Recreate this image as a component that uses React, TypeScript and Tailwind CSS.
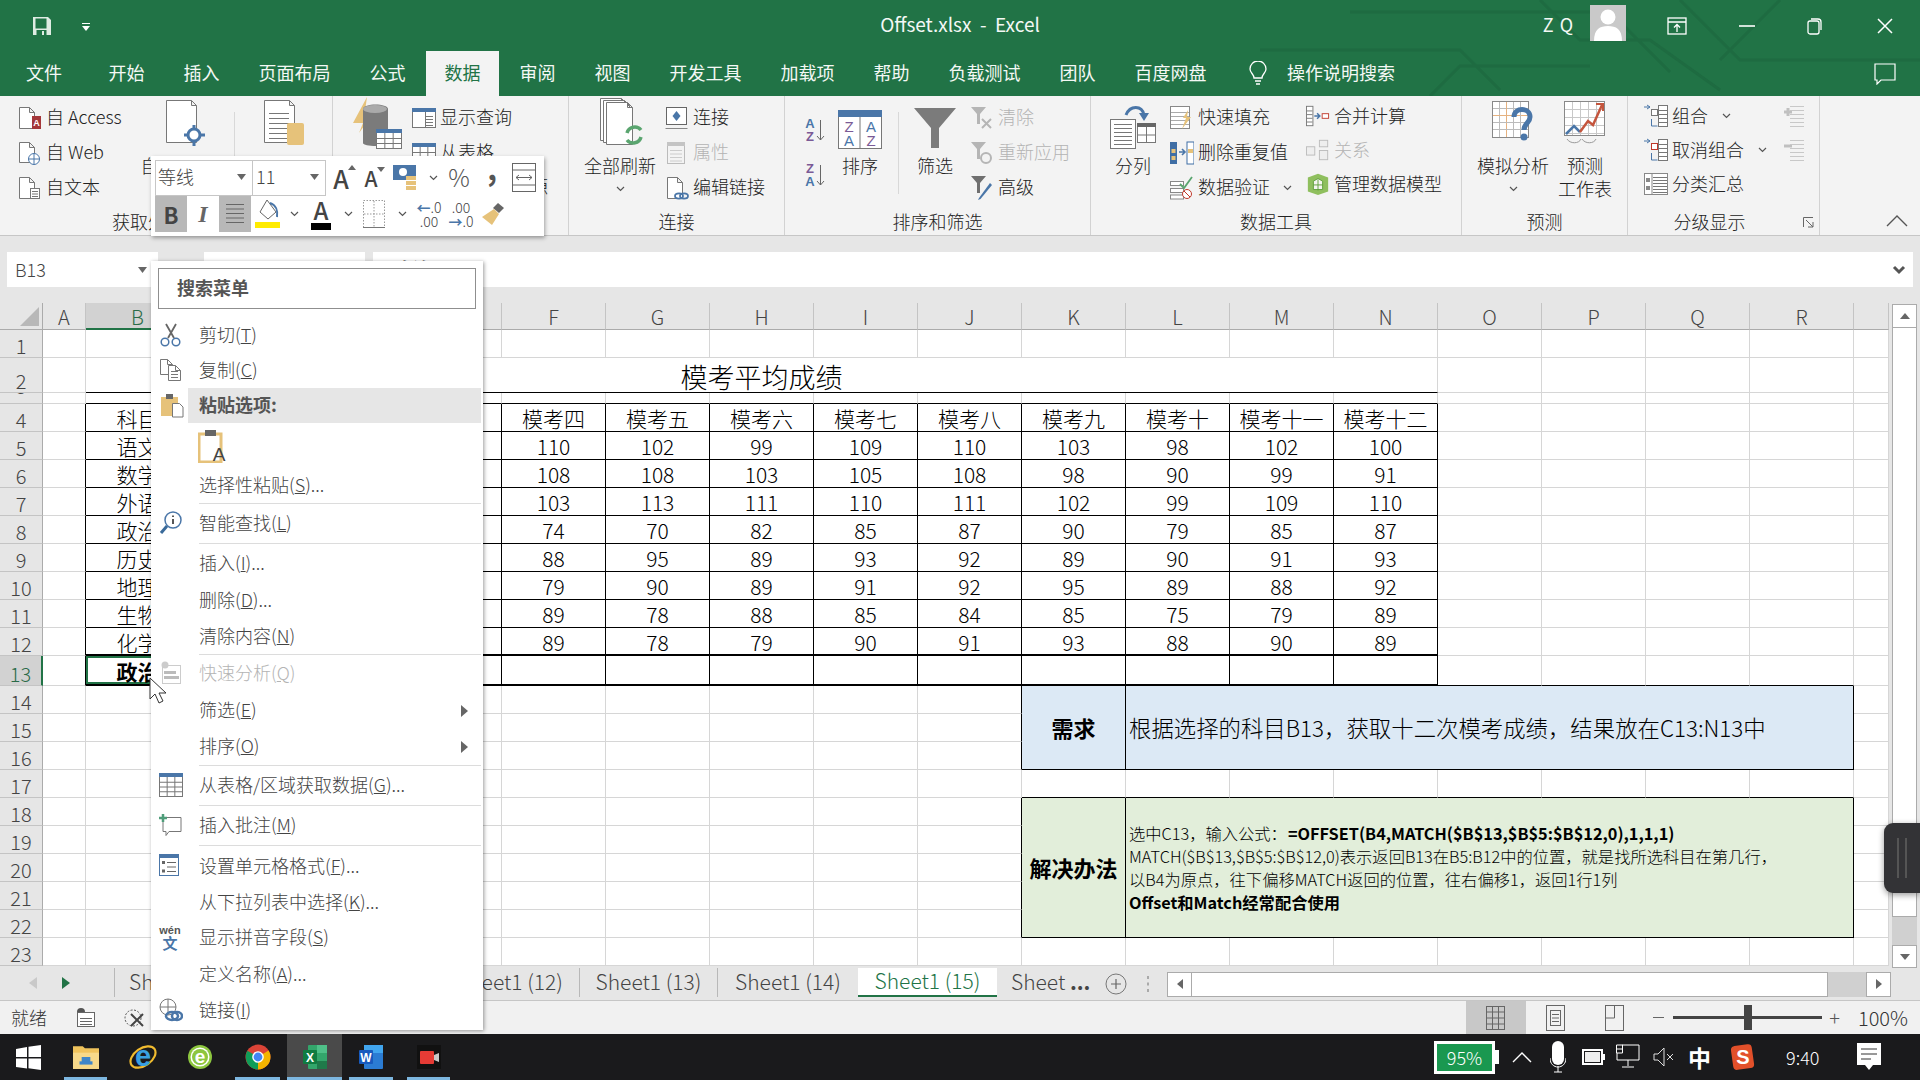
import React from "react";

type P = { className?: string };
const B = "#4a76a8";
const Y = "#e6c27a";

/* ---------- small drawing helpers ---------- */
const Page = ({ x = 0.5, y = 0.5, w = 14, h = 20, c = "#777" }: { x?: number; y?: number; w?: number; h?: number; c?: string }) => (
  <path d={`M${x} ${y}h${w - 5}l5 5v${h - 5}h-${w}zM${x + w - 5} ${y}v5h5`} fill="#fff" stroke={c} />
);
const Lines = ({ x, y, w, n, gap = 3, c = "#777" }: { x: number; y: number; w: number; n: number; gap?: number; c?: string }) => (
  <>
    {Array.from({ length: n }, (_, i) => (
      <path key={i} d={`M${x} ${y + i * gap + 0.5}h${w}`} stroke={c} />
    ))}
  </>
);
const Table = ({ x, y, w, h, cols, rows, head = B, stroke = "#777" }: { x: number; y: number; w: number; h: number; cols: number; rows: number; head?: string; stroke?: string }) => (
  <>
    <rect x={x + 0.5} y={y + 0.5} width={w} height={h} fill="#fff" stroke={stroke} />
    <rect x={x} y={y} width={w + 1} height={4} fill={head} />
    {Array.from({ length: cols - 1 }, (_, i) => (
      <path key={`c${i}`} d={`M${x + ((i + 1) * w) / cols + 0.5} ${y + 4}v${h - 4}`} stroke={stroke} />
    ))}
    {Array.from({ length: rows - 1 }, (_, i) => (
      <path key={`r${i}`} d={`M${x} ${y + 4 + ((i + 1) * (h - 4)) / rows + 0.5}h${w}`} stroke={stroke} />
    ))}
  </>
);
const Chev = ({ className = "" }: P) => (
  <svg width="9" height="6" viewBox="0 0 9 6" className={className}>
    <path d="M1 1l3.5 3.5L8 1" fill="none" stroke="#555" strokeWidth="1.2" />
  </svg>
);
const Tri = ({ className = "" }: P) => (
  <svg width="9" height="6" viewBox="0 0 9 6" className={className}>
    <path d="M0 0h9L4.5 6z" fill="#666" />
  </svg>
);

/* ---------- ribbon icons ---------- */
const Ic = ({ w = 24, h = 24, children }: { w?: number; h?: number; children: React.ReactNode }) => (
  <svg width={w} height={h} viewBox={`0 0 ${w} ${h}`} className="block">{children}</svg>
);
const IAccess = () => <Ic><Page x={1.5} y={1.5} w={15} h={21} /><rect x="14" y="10" width="9" height="13" fill="#a4373a" /><text x="18.5" y="20" fontSize="9" fontWeight="700" fill="#fff" textAnchor="middle" fontFamily="Liberation Sans">A</text></Ic>;
const IWeb = () => <Ic><Page x={1.5} y={1.5} w={15} h={20} /><circle cx="16" cy="18" r="5.5" fill="#fff" stroke={B} /><path d="M10.5 18h11M16 12.5v11" stroke={B} /></Ic>;
const IText = () => <Ic><Page x={1.5} y={1.5} w={15} h={21} /><rect x="12.5" y="12.5" width="9" height="10" fill="#fff" stroke="#777" /><Lines x={14} y={15} w={6} n={3} gap={2.5} /></Ic>;
const IOther = () => <Ic w={42} h={50}><Page x={1.5} y={1.5} w={30} h={42} c="#777" /><circle cx="29" cy="36" r="6" fill="#fff" stroke={B} strokeWidth="3" /><path d="M29 26v5M29 41v6M19 36h5M34 36h6" stroke={B} strokeWidth="3" /></Ic>;
const IExisting = () => <Ic w={42} h={50}><Page x={1.5} y={1.5} w={30} h={42} c="#777" /><Lines x={6} y={14} w={20} n={6} gap={5} /><rect x="24" y="24" width="17" height="22" rx="2" fill={Y} /></Ic>;
const INewQuery = () => <Ic w={52} h={52}><path d="M16 0L2 26h10L8 36l16-22H14z" fill={Y} /><path d="M12 12c0-6 25-6 25 0v34c0 4-25 4-25 0z" fill="#7b7b7b" /><ellipse cx="24" cy="12" rx="12" ry="4" fill="#aaa" /><Table x={25} y={32} w={25} h={19} cols={3} rows={3} /></Ic>;
const IShowQuery = () => <Ic h={22}><Table x={0} y={1} w={23} h={19} cols={1} rows={1} /><Lines x={14} y={9} w={7} n={4} gap={3} /><path d="M13.5 5v15" stroke="#777" /></Ic>;
const IFromTable = () => <Ic h={22}><Table x={0} y={1} w={23} h={19} cols={3} rows={3} /></Ic>;
const IRefresh = () => <Ic w={50} h={52}><Page x={1.5} y={1.5} w={26} h={42} /><Page x={4.5} y={3.5} w={26} h={42} /><Page x={7.5} y={5.5} w={26} h={42} /><path d="M28 36a8 8 0 0 1 14-3M42 40a8 8 0 0 1-14 3" fill="none" stroke="#5aa56f" strokeWidth="3.5" /></Ic>;
const IConn = () => <Ic><rect x="1.5" y="1.5" width="20" height="17" fill="#fff" stroke="#666" /><path d="M0.5 22.5h22" stroke="#888" /><path d="M11.5 5l4 5-4 5-4-5z" fill={B} /></Ic>;
const IProps = () => <Ic><rect x="2.5" y="1.5" width="17" height="21" fill="#f3f3f3" stroke="#bbb" /><rect x="2" y="1" width="18" height="4" fill="#c4c4c4" /><Lines x={5} y={9} w={12} n={4} gap={3.5} c="#ccc" /></Ic>;
const IEdit = () => <Ic><Page x={2.5} y={1.5} w={15} h={21} /><ellipse cx="14" cy="20" rx="4" ry="2.6" fill="none" stroke={B} strokeWidth="1.8" /><ellipse cx="19" cy="20" rx="4" ry="2.6" fill="none" stroke={B} strokeWidth="1.8" /></Ic>;
const ISort = ({ a, z }: { a: string; z: string }) => (
  <Ic w={21} h={25}>
    <text x="6" y="11" fontSize="13" fontWeight="700" fill={a === "A" ? B : "#7a5a96"} textAnchor="middle" fontFamily="Liberation Sans">{a}</text>
    <text x="6" y="24" fontSize="13" fontWeight="700" fill={z === "A" ? B : "#7a5a96"} textAnchor="middle" fontFamily="Liberation Sans">{z}</text>
    <path d="M16.5 3v20M13 19l3.5 4 3.5-4" fill="none" stroke="#666" />
  </Ic>
);
const ISortBig = () => (
  <Ic w={44} h={39}>
    <rect x="0.5" y="0.5" width="43" height="38" fill="#fff" stroke="#777" />
    <rect x="0" y="0" width="44" height="7" fill={B} />
    <path d="M22 7v31" stroke="#777" />
    <text x="11" y="22" fontSize="15" fill="#7a5a96" textAnchor="middle" fontFamily="Liberation Sans">Z</text>
    <text x="11" y="36" fontSize="15" fill={B} textAnchor="middle" fontFamily="Liberation Sans">A</text>
    <text x="33" y="22" fontSize="15" fill={B} textAnchor="middle" fontFamily="Liberation Sans">A</text>
    <text x="33" y="36" fontSize="15" fill="#7a5a96" textAnchor="middle" fontFamily="Liberation Sans">Z</text>
  </Ic>
);
const IFunnel = () => <Ic w={42} h={42}><path d="M0 1h42L25 21v20h-8V21z" fill="#7b7b7b" /></Ic>;
const SmallFunnel = ({ c }: { c: string }) => <path d="M1 1h15l-6 7v10H7V8z" fill={c} />;
const IClear = () => <Ic><SmallFunnel c="#b5b5b5" /><path d="M12 13l9 9M21 13l-9 9" stroke="#b5b5b5" strokeWidth="2" /></Ic>;
const IReapply = () => <Ic><SmallFunnel c="#b5b5b5" /><circle cx="16" cy="17" r="5" fill="none" stroke="#b5b5b5" strokeWidth="2" /></Ic>;
const IAdv = () => <Ic h={26}><SmallFunnel c="#6f6f6f" /><path d="M20 8L9 23l-1 2 2.5-1L22 10z" fill={B} /></Ic>;
const ISplit = () => <Ic w={46} h={46}><path d="M16 12C20 2 32 2 34 12" fill="none" stroke={B} strokeWidth="3" /><path d="M29 10h10l-5 8z" fill={B} /><rect x="0.5" y="16.5" width="25" height="29" fill="#fff" stroke="#777" /><Lines x={4} y={21} w={18} n={6} gap={4} /><Table x={27} y={20} w={18} h={19} cols={2} rows={2} head="#666" /></Ic>;
const IFlash = () => <Ic><rect x="0.5" y="0.5" width="19" height="22" fill="#fff" stroke="#888" /><Lines x={1} y={6} w={18} n={4} gap={4} c="#aaa" /><path d="M12 23l4-11h-3l5-8-1 7h4z" fill={Y} /></Ic>;
const IDup = () => <Ic><rect x="0" y="1" width="7" height="22" fill="#3f6ea5" /><rect x="17" y="1" width="7" height="22" fill="#fff" stroke="#3f6ea5" /><rect x="1.5" y="8" width="4" height="4" fill={Y} /><rect x="1.5" y="15" width="4" height="4" fill={Y} /><rect x="18" y="8" width="5" height="4" fill={Y} /><path d="M9 11h6M12 8l3 3-3 3" fill="none" stroke={B} strokeWidth="1.6" /></Ic>;
const IValid = () => <Ic><rect x="0.5" y="5.5" width="13" height="4" fill="#fff" stroke="#888" /><rect x="0.5" y="12.5" width="13" height="4" fill="#fff" stroke="#888" /><rect x="0.5" y="19" width="13" height="4" fill="#fff" stroke="#888" /><path d="M10 8l4 4 8-11" fill="none" stroke="#5aa56f" strokeWidth="1.8" /><circle cx="17" cy="18" r="4.5" fill="#fff" stroke="#c0392b" /><path d="M14 15l6 6" stroke="#c0392b" /></Ic>;
const IMerge = () => <Ic w={26}><rect x="0.5" y="1.5" width="7" height="21" fill="#fff" stroke="#777" /><Lines x={1} y={6} w={6} n={4} gap={4} /><path d="M9 12h5M12 9l3 3-3 3" fill="none" stroke={B} strokeWidth="1.6" /><rect x="17.5" y="9.5" width="7" height="5" fill="#fff" stroke="#c0392b" /></Ic>;
const IRel = () => <Ic w={26}><rect x="0.5" y="8.5" width="9" height="9" fill="#eee" stroke="#bbb" /><rect x="14.5" y="1.5" width="9" height="7" fill="#eee" stroke="#bbb" /><rect x="14.5" y="12.5" width="9" height="10" fill="#eee" stroke="#bbb" /></Ic>;
const IModel = () => <Ic w={26}><path d="M2 5l11-4 11 4v15l-11 4-11-4z" fill="#8fbf5e" /><path d="M8 9l5-3 5 3v9H8z" fill="#f5f5f0" stroke="#5e9e3c" /><path d="M13 7v12M8 13h10" stroke="#5e9e3c" /></Ic>;
const IWhatIf = () => <Ic w={42} h={48}><rect x="0.5" y="0.5" width="36" height="36" fill="#fff" stroke="#888" />{[7, 14, 21, 28].map(n => <path key={n} d={`M${n}.5 1v35M1 ${n}.5h35`} stroke={n === 14 ? "#e6b280" : "#bbb"} />)}<path d="M22 16c0-10 16-10 16 0 0 6-6 6-6 13" fill="none" stroke={B} strokeWidth="5" /><circle cx="32" cy="36" r="3.5" fill={B} /></Ic>;
const IForecast = () => <Ic w={42} h={48}><rect x="0.5" y="0.5" width="40" height="34" fill="#fff" stroke="#888" />{[8, 16, 24, 32].map(n => <path key={n} d={`M${n}.5 1v33M1 ${n}.5h39`} stroke="#c8c8c8" />)}<path d="M2 33l8-8 6 6" fill="none" stroke={B} strokeWidth="2.5" /><path d="M16 31l8-11 5 4 9-20" fill="none" stroke="#c4553d" strokeWidth="2.5" /><path d="M32 3h7v7" fill="none" stroke="#c4553d" strokeWidth="2" /><path d="M3 38c3 5 12 5 14 0M18 38c3 5 12 5 14 0" fill="none" stroke="#999" /></Ic>;
const IGroup = ({ red }: { red?: boolean }) => <Ic><rect x="14.5" y="1.5" width="9" height="21" fill="#fff" stroke="#777" /><Lines x={15} y={6} w={8} n={4} gap={4} /><rect x="7.5" y="5.5" width="6" height="6" fill="#fff" stroke={red ? "#c0392b" : "#777"} /><path d="M7.5 15v7h6M0 3h6M3 1l3 2-3 2" fill="none" stroke={B} /></Ic>;
const ISub = () => <Ic><rect x="0.5" y="1.5" width="23" height="21" fill="#fff" stroke="#888" /><path d="M8 2v20" stroke="#888" /><Lines x={9} y={5} w={14} n={6} gap={3} /><rect x="2" y="6" width="4" height="4" fill="#888" /><rect x="2" y="14" width="4" height="4" fill="#888" /></Ic>;
const IPlus = ({ minus }: { minus?: boolean }) => <Ic><path d="M3 9h8" stroke="#c0c0c0" strokeWidth="3" />{!minus && <path d="M7 5v8" stroke="#c0c0c0" strokeWidth="3" />}<Lines x={9} y={3} w={14} n={6} gap={4} c="#c8c8c8" /></Ic>;

/* ---------- ribbon structure ---------- */
const Small = ({ icon, label, off, after, className = "" }: { icon: React.ReactNode; label: string; off?: boolean; after?: React.ReactNode; className?: string }) => (
  <div className={`flex items-center whitespace-nowrap ${className}`}>
    <span className="w-[24px] flex justify-center shrink-0">{icon}</span>
    <span className={`ml-[4px] pb-[2px] ${off ? "text-[#b4b4b4]" : ""}`}>{label}</span>
    {after}
  </div>
);
const Big = ({ icon, lines, w, className = "", chev }: { icon: React.ReactNode; lines: string[]; w: string; className?: string; chev?: boolean }) => (
  <div className={`flex flex-col items-center shrink-0 ${w} ${className}`}>
    <div className="h-[58px] flex items-end justify-center pb-[5px]">{icon}</div>
    {lines.map(l => <div key={l} className="leading-[23px] whitespace-nowrap">{l}</div>)}
    {chev && <Chev className="mt-[9px]" />}
  </div>
);
const Col3 = ({ className = "", h = "h-[35px]", children }: { className?: string; h?: string; children: React.ReactNode[] }) => (
  <div className={`flex flex-col pt-[4px] shrink-0 ${className}`}>
    {children.map((c, i) => <div key={i} className={`${h} flex items-center`}>{c}</div>)}
  </div>
);
const Group = ({ w, label, children, launcher }: { w: string; label: string; children: React.ReactNode; launcher?: boolean }) => (
  <div className={`${w} shrink-0 h-full flex flex-col border-r border-[#d2d2d2] relative`}>
    <div className="flex-1 flex min-h-0">{children}</div>
    <div className={`h-[26px] leading-[24px] text-center ${launcher ? "pr-[28px]" : ""}`}>{label}</div>
    {launcher && (
      <svg width="12" height="12" viewBox="0 0 12 12" className="absolute right-[4px] bottom-[6px]">
        <path d="M.5 10V.5H10M3 3l7 7M10 5v5H5" fill="none" stroke="#666" />
      </svg>
    )}
  </div>
);

const Ribbon = () => (
  <div className="h-[139px] bg-[#f3f3f3] flex text-[18px] text-[#222] border-b border-[#c6c6c6] box-content">
    <Group w="w-[333px]" label="获取外部数据">
      <Col3 className="ml-[18px] w-[119px]">{[<Small icon={<IAccess />} label="自 Access" />, <Small icon={<IWeb />} label="自 Web" />, <Small icon={<IText />} label="自文本" />]}</Col3>
      <Big w="w-[97px]" icon={<IOther />} lines={["自其他来源"]} />
      <div className="w-px h-[80px] mt-[16px] bg-[#d8d8d8]" />
      <Big w="w-[97px]" icon={<IExisting />} lines={["现有连接"]} />
    </Group>
    <Group w="w-[236px]" label="获取和转换">
      <Big w="w-[52px]" className="ml-[18px]" icon={<INewQuery />} lines={["新建", "查询"]} />
      <Col3 className="ml-[9px]">{[<Small icon={<IShowQuery />} label="显示查询" />, <Small icon={<IFromTable />} label="从表格" />, <Small icon={<span />} label="最近使用的源" />]}</Col3>
    </Group>
    <Group w="w-[216px]" label="连接">
      <Big w="w-[72px]" className="ml-[15px]" icon={<span className="block ml-[8px]"><IRefresh /></span>} lines={["全部刷新"]} chev />
      <Col3 className="ml-[9px]">{[<Small icon={<IConn />} label="连接" />, <Small icon={<IProps />} label="属性" off />, <Small icon={<IEdit />} label="编辑链接" />]}</Col3>
    </Group>
    <Group w="w-[306px]" label="排序和筛选">
      <div className="ml-[19px] w-[21px] flex flex-col pt-[21px] gap-[20px] shrink-0"><ISort a="A" z="Z" /><ISort a="Z" z="A" /></div>
      <Big w="w-[44px]" className="ml-[13px]" icon={<ISortBig />} lines={["排序"]} />
      <div className="w-px h-[82px] mt-[16px] ml-[16px] bg-[#d8d8d8]" />
      <Big w="w-[42px]" className="ml-[15px]" icon={<IFunnel />} lines={["筛选"]} />
      <Col3 className="ml-[14px]">{[<Small icon={<IClear />} label="清除" off />, <Small icon={<IReapply />} label="重新应用" off />, <Small icon={<IAdv />} label="高级" />]}</Col3>
    </Group>
    <Group w="w-[371px]" label="数据工具">
      <Big w="w-[46px]" className="ml-[19px]" icon={<ISplit />} lines={["分列"]} />
      <Col3 className="ml-[14px] w-[136px]">{[<Small icon={<IFlash />} label="快速填充" />, <Small icon={<IDup />} label="删除重复值" />, <Small icon={<IValid />} label="数据验证" after={<Chev className="ml-[13px]" />} />]}</Col3>
      <Col3 h="h-[34px]" className="-mt-[1px]">{[<Small icon={<IMerge />} label="合并计算" />, <Small icon={<IRel />} label="关系" off />, <Small icon={<IModel />} label="管理数据模型" />]}</Col3>
    </Group>
    <Group w="w-[166px]" label="预测">
      <Big w="w-[72px]" className="ml-[15px]" icon={<IWhatIf />} lines={["模拟分析"]} chev />
      <Big w="w-[54px]" className="ml-[9px]" icon={<IForecast />} lines={["预测", "工作表"]} />
    </Group>
    <Group w="w-[192px]" label="分级显示" launcher>
      <Col3 h="h-[34px]" className="ml-[16px] -mt-[1px] w-[137px]">{[<Small icon={<IGroup />} label="组合" after={<Chev className="ml-[14px]" />} />, <Small icon={<IGroup red />} label="取消组合" after={<Chev className="ml-[14px]" />} />, <Small icon={<ISub />} label="分类汇总" />]}</Col3>
      <div className="flex flex-col gap-[10px] pt-[7px]"><IPlus /><IPlus minus /></div>
    </Group>
    <div className="flex-1 flex justify-end items-end pb-[8px] pr-[12px]">
      <svg width="22" height="12" viewBox="0 0 22 12"><path d="M1 11L11 1l10 10" fill="none" stroke="#555" strokeWidth="1.4" /></svg>
    </div>
  </div>
);

/* ---------- title and tabs ---------- */
const TitleBar = () => (
  <div className="h-[51px] grid grid-cols-[1fr_auto_1fr] items-center text-[#f4f8f5] relative z-10">
    <div className="flex items-center pl-[32px]">
      <svg width="20" height="20" viewBox="0 0 20 20"><path d="M1 1h15l3 3v15H1z" fill="#dfece3" /><rect x="3.5" y="2.5" width="11" height="10" fill="#217346" /><rect x="4.5" y="14" width="10" height="5" fill="#217346" /><rect x="10" y="15" width="2" height="4" fill="#dfece3" /></svg>
      <svg width="10" height="10" viewBox="0 0 10 10" className="ml-[29px] mt-[3px]"><path d="M1 1.5h8" stroke="#fff" /><path d="M1 4h8L5 9z" fill="#fff" /></svg>
    </div>
    <div className="text-[19px] font-normal whitespace-pre pb-[2px]">Offset.xlsx  -  Excel</div>
    <div className="flex items-center justify-end">
      <span className="text-[18px] font-normal tracking-[1px] pb-[2px]">Z Q</span>
      <div className="ml-[16px] w-[36px] h-[36px] bg-[#c9c9c9] -mt-[5px] overflow-hidden">
        <svg width="36" height="36" viewBox="0 0 36 36"><circle cx="18" cy="12" r="7.5" fill="#fff" /><path d="M4 36c0-12 6-15 14-15s14 3 14 15z" fill="#fff" /></svg>
      </div>
      <svg width="20" height="20" viewBox="0 0 20 20" className="ml-[41px]"><rect x="1" y="2" width="18" height="16" fill="none" stroke="#fff" strokeWidth="1.3" /><path d="M1 6h18M10 16V9M7 11.5L10 8.5l3 3" fill="none" stroke="#fff" strokeWidth="1.3" /></svg>
      <svg width="16" height="16" viewBox="0 0 16 16" className="ml-[52px]"><path d="M0 8h16" stroke="#fff" strokeWidth="1.6" /></svg>
      <svg width="16" height="18" viewBox="0 0 16 18" className="ml-[52px]"><rect x="1" y="4" width="11" height="13" rx="2" fill="none" stroke="#fff" strokeWidth="1.3" /><path d="M4 2h7a3 3 0 0 1 3 3v8" fill="none" stroke="#fff" strokeWidth="1.3" /></svg>
      <svg width="16" height="16" viewBox="0 0 16 16" className="ml-[54px] mr-[27px]"><path d="M1 1l14 14M15 1L1 15" stroke="#fff" strokeWidth="1.5" /></svg>
    </div>
  </div>
);

const tabNames = ["开始", "插入", "页面布局", "公式", "数据", "审阅", "视图", "开发工具", "加载项", "帮助", "负载测试", "团队", "百度网盘"];
const Tabs = () => (
  <div className="h-[45px] flex text-[18px] font-normal text-[#f4f8f5] relative z-10">
    <div className="ml-[7px] mr-[8px] px-[19px] pb-[2px] flex items-center">文件</div>
    {tabNames.map(t => (
      <div key={t} className={`px-[18.5px] mx-[1px] pb-[2px] flex items-center ${t === "数据" ? "bg-[#f3f3f3] text-[#217346]" : ""}`}>{t}</div>
    ))}
    <div className="flex items-center ml-[23px] pb-[2px]">
      <svg width="18" height="24" viewBox="0 0 18 24"><path d="M5 17c0-4-4-5-4-9a8 8 0 0 1 16 0c0 4-4 5-4 9zM6 20h6M7 23h4" fill="none" stroke="#fff" strokeWidth="1.3" /></svg>
      <span className="ml-[20px]">操作说明搜索</span>
    </div>
    <div className="ml-auto mr-[24px] flex items-center">
      <svg width="22" height="22" viewBox="0 0 22 22"><path d="M1 1h20v16H7l-4 4v-4H1z" fill="none" stroke="#fff" strokeWidth="1.2" /></svg>
    </div>
  </div>
);

/* ---------- formula bar ---------- */
const FormulaBar = () => (
  <div className="h-[67px] bg-[#e6e6e6] pt-[16px] flex items-start text-[#444]">
    <div className="ml-[7px] w-[151px] h-[35px] bg-white flex items-center justify-between px-[8px] text-[18px]">
      <span>B13</span><Tri className="mr-[3px]" />
    </div>
    <div className="ml-[46px] w-[161px] h-[35px] bg-white" />
    <div className="ml-[8px] w-[1540px] h-[35px] bg-white flex items-center justify-between text-[21px] pl-[18px] pr-[7px]">
      <span className="font-bold">政治</span>
      <svg width="14" height="10" viewBox="0 0 14 10"><path d="M2 2l5 5 5-5" fill="none" stroke="#555" strokeWidth="3" /></svg>
    </div>
  </div>
);

/* ---------- spreadsheet ---------- */
const letters = ["A", "B", "C", "D", "E", "F", "G", "H", "I", "J", "K", "L", "M", "N", "O", "P", "Q", "R", ""];
const heads = ["科目", "模考一", "模考二", "模考三", "模考四", "模考五", "模考六", "模考七", "模考八", "模考九", "模考十", "模考十一", "模考十二"];
const data: (string | number)[][] = [
  ["语文", "", "", "", 110, 102, 99, 109, 110, 103, 98, 102, 100],
  ["数学", "", "", "", 108, 108, 103, 105, 108, 98, 90, 99, 91],
  ["外语", "", "", "", 103, 113, 111, 110, 111, 102, 99, 109, 110],
  ["政治", "", "", "", 74, 70, 82, 85, 87, 90, 79, 85, 87],
  ["历史", "", "", "", 88, 95, 89, 93, 92, 89, 90, 91, 93],
  ["地理", "", "", "", 79, 90, 89, 91, 92, 95, 89, 88, 92],
  ["生物", "", "", "", 89, 78, 88, 85, 84, 85, 75, 79, 89],
  ["化学", "", "", "", 89, 78, 79, 90, 91, 93, 88, 90, 89],
];

const cellBorder = (r: number, c: number) => {
  const inTable = c >= 2 && c <= 14;
  const boxRow = (r >= 14 && r <= 16) || (r >= 18 && r <= 22);
  const rightBlack = (r >= 4 && r <= 13 && (c === 1 || inTable)) || (c === 10 && boxRow);
  const bottomBlack = (r === 3 && inTable) || (r >= 4 && r <= 13 && inTable) || (r === 13 && c >= 11 && c <= 18) || (r === 17 && c >= 11 && c <= 18);
  const thick = (r === 12 || r === 13) && inTable;
  return `border-r border-b ${rightBlack ? "border-r-black" : "border-r-[#d6d6d6]"} ${bottomBlack ? "border-b-black" : "border-b-[#d6d6d6]"} ${thick ? "border-b-2" : ""}`;
};

const Sheet = () => {
  const cells: React.ReactNode[] = [];
  cells.push(
    <div key="corner" className="bg-[#e6e6e6] border-r border-b border-[#ababab] flex items-end justify-end pr-[3px] pb-[3px]">
      <svg width="19" height="19" viewBox="0 0 19 19"><path d="M19 0v19H0z" fill="#b8b8b8" /></svg>
    </div>
  );
  letters.forEach((l, i) => {
    const sel = l === "B";
    cells.push(
      <div key={`h${i}`} className={`flex items-center justify-center text-[20px] leading-[24px] pt-[2px] border-r border-r-[#c4c4c4] ${sel ? "bg-[#d2d2d2] text-[#2a6b48] border-b-2 border-b-[#217346]" : "bg-[#e6e6e6] text-[#444] border-b border-b-[#ababab]"}`}>{l}</div>
    );
  });
  for (let r = 1; r <= 23; r++) {
    const selRow = r === 13;
    cells.push(
      <div key={`n${r}`} className={`flex justify-center text-[20px] leading-[22px] border-b border-b-[#c4c4c4] ${r === 3 ? "items-start overflow-hidden" : "items-end"} ${selRow ? "bg-[#d2d2d2] text-[#2a6b48] border-r-2 border-r-[#217346]" : "bg-[#e6e6e6] text-[#444] border-r border-r-[#ababab]"}`}>
        <span className={r === 3 ? "-mt-[18px]" : ""}>{r}</span>
      </div>
    );
    for (let c = 1; c <= 19; c++) {
      const k = `${r}-${c}`;
      if (r === 2 && c >= 3 && c <= 14) continue;
      if (r === 2 && c === 2) {
        cells.push(<div key={k} className="col-span-13 flex items-end justify-center text-[27px] leading-[30px] border-b border-b-black border-r border-r-[#d6d6d6] text-black">模考平均成绩</div>);
        continue;
      }
      if (r >= 14 && r <= 16 && c >= 11 && c <= 18) {
        if (r === 14 && c === 11) cells.push(<div key={k} className="row-span-3 bg-[#dce9f5] border-r border-b border-black flex items-center justify-center text-[22px] font-bold text-black">需求</div>);
        if (r === 14 && c === 12) cells.push(<div key={k} className="row-span-3 col-span-7 bg-[#dce9f5] border-r border-b border-black flex items-center pl-[3px] text-[22.4px] text-black whitespace-nowrap">根据选择的科目B13，获取十二次模考成绩，结果放在C13:N13中</div>);
        continue;
      }
      if (r >= 18 && r <= 22 && c >= 11 && c <= 18) {
        if (r === 18 && c === 11) cells.push(<div key={k} className="row-span-5 bg-[#e2eeda] border-r border-b border-black flex items-center justify-center text-[22px] font-bold text-black">解决办法</div>);
        if (r === 18 && c === 12) cells.push(
          <div key={k} className="row-span-5 col-span-7 bg-[#e2eeda] border-r border-b border-black flex flex-col justify-center pl-[3px] text-[16.3px] leading-[23px] text-black whitespace-nowrap">
            <div>选中C13，输入公式：<span className="font-bold ml-[1px]">=OFFSET(B4,MATCH($B$13,$B$5:$B$12,0),1,1,1)</span></div>
            <div>MATCH($B$13,$B$5:$B$12,0)表示返回B13在B5:B12中的位置，就是找所选科目在第几行，</div>
            <div>以B4为原点，往下偏移MATCH返回的位置，往右偏移1，返回1行1列</div>
            <div className="font-bold">Offset和Match经常配合使用</div>
          </div>
        );
        continue;
      }
      let content: React.ReactNode = null;
      if (c >= 2 && c <= 14) {
        if (r === 4) content = heads[c - 2];
        if (r >= 5 && r <= 12) content = data[r - 5][c - 2];
      }
      const sel = r === 13 && c === 2;
      cells.push(
        <div key={k} className={`flex items-center justify-center whitespace-nowrap text-[21px] leading-[26px] pt-[1px] text-black ${cellBorder(r, c)} ${sel ? "shadow-[inset_0_0_0_2px_#217346] font-bold" : ""}`}>
          {sel ? "政治" : content}
        </div>
      );
    }
  }
  return (
    <div className="w-[1889px] h-[663px] grid grid-cols-[43px_43px_repeat(17,104px)_35px] grid-rows-[27px_28px_35px_11px_repeat(9,28px)_30px_repeat(10,28px)] bg-white shrink-0">
      {cells}
    </div>
  );
};

const ScrollBtn = ({ d, className = "" }: { d: string; className?: string }) => (
  <div className={`bg-white border border-[#ababab] flex items-center justify-center shrink-0 ${className}`}>
    <svg width="12" height="12" viewBox="0 0 12 12"><path d={d} fill="#666" /></svg>
  </div>
);
const VScroll = () => (
  <div className="flex-1 bg-[#e6e6e6] flex flex-col pl-[3px] pr-[3px] pt-[1px]">
    <ScrollBtn d="M6 3l5 6H1z" className="h-[24px]" />
    <div className="h-[589px] bg-white border border-t-0 border-[#ababab] shrink-0" />
    <div className="h-[28px] bg-[#d0d0d0] shrink-0" />
    <ScrollBtn d="M6 9L1 3h10z" className="h-[23px]" />
  </div>
);

/* ---------- sheet tabs ---------- */
const SheetTab = ({ name, w, active }: { name: string; w: string; active?: boolean }) => (
  <div className={`${w} h-full shrink-0 flex items-center justify-center pb-[3px] ${active ? "bg-white text-[#217346] border-b-2 border-b-[#217346]" : "text-[#444] border-r border-r-[#b8b8b8]"}`}>{name}</div>
);
const SheetTabs = () => (
  <div className="h-[33px] pb-[3px] bg-[#e6e6e6] border-b border-[#c6c6c6] flex items-center text-[21px] leading-none box-border">
    <div className="w-[115px] h-full flex items-center border-r border-[#b8b8b8]">
      <svg width="10" height="14" viewBox="0 0 10 14" className="ml-[28px]"><path d="M9 1v12L1 7z" fill="#c9c9c9" /></svg>
      <svg width="10" height="14" viewBox="0 0 10 14" className="ml-[23px]"><path d="M1 1v12l8-6z" fill="#217346" /></svg>
    </div>
    <div className="w-[326px] h-full pl-[14px] pb-[3px] flex items-center text-[#444] shrink-0">Sheet1 (10)</div>
    <SheetTab name="Sheet1 (12)" w="w-[139px]" />
    <SheetTab name="Sheet1 (13)" w="w-[138px]" />
    <div className="w-[140px] h-full shrink-0 flex items-center justify-center pb-[3px] text-[#444]">Sheet1 (14)</div>
    <SheetTab name="Sheet1 (15)" w="w-[139px]" active />
    <div className="w-[105px] h-full shrink-0 pl-[14px] pb-[3px] flex items-center text-[#444] whitespace-pre">Sheet <span className="font-bold">...</span></div>
    <svg width="22" height="22" viewBox="0 0 22 22" className="ml-[3px] mt-[3px]"><circle cx="11" cy="11" r="10" fill="none" stroke="#777" /><path d="M11 6v10M6 11h10" stroke="#666" strokeWidth="1.2" /></svg>
    <svg width="4" height="18" viewBox="0 0 4 18" className="ml-[19px] mt-[3px]"><path d="M2 1v3M2 7.5v3M2 14v3" stroke="#aaa" strokeWidth="2" /></svg>
    <ScrollBtn d="M3 6l6-5v10z" className="ml-[17px] w-[25px] h-[25px] mt-[3px]" />
    <div className="w-[636px] h-[25px] mt-[3px] bg-white border-y border-r border-[#ababab] shrink-0" />
    <div className="w-[38px] h-[25px] mt-[3px] bg-[#d0d0d0] shrink-0" />
    <ScrollBtn d="M9 6L3 1v10z" className="w-[25px] h-[25px] mt-[3px]" />
  </div>
);

/* ---------- status bar ---------- */
const StatusBar = () => (
  <div className="h-[33px] bg-[#f1f1f1] flex items-center text-[18px] text-[#333]">
    <span className="ml-[11px]">就绪</span>
    <svg width="20" height="22" viewBox="0 0 20 22" className="ml-[29px]"><circle cx="5" cy="5" r="4" fill="#555" /><rect x="1.5" y="5.5" width="17" height="14" fill="#fff" stroke="#666" /><Lines x={4} y={11} w={12} n={3} gap={3} c="#666" /></svg>
    <svg width="24" height="24" viewBox="0 0 24 24" className="ml-[27px]"><circle cx="10" cy="12" r="8" fill="none" stroke="#555" strokeDasharray="2 1.5" /><path d="M8 8l12 12M20 8L8 20" stroke="#444" strokeWidth="2" /></svg>
    <div className="ml-auto flex items-center h-full">
      <div className="w-[60px] h-full bg-[#c8c8c8] flex items-center justify-center">
        <svg width="20" height="24" viewBox="0 0 20 24"><rect x=".5" y=".5" width="18" height="23" fill="none" stroke="#666" /><path d="M.5 6h18M.5 12h18M.5 18h18M6.5 0v24M12.5 0v24" stroke="#666" /></svg>
      </div>
      <svg width="20" height="26" viewBox="0 0 20 26" className="ml-[20px]"><rect x=".5" y=".5" width="18" height="25" fill="none" stroke="#666" /><rect x="4.5" y="5.5" width="10" height="15" fill="none" stroke="#666" /><Lines x={6} y={9} w={7} n={3} gap={3.5} c="#666" /></svg>
      <svg width="20" height="26" viewBox="0 0 20 26" className="ml-[39px]"><rect x=".5" y=".5" width="18" height="25" fill="none" stroke="#666" /><path d="M9.5 1v12H1" fill="none" stroke="#666" /></svg>
      <div className="w-[11px] h-[1px] bg-[#666] ml-[28px]" />
      <div className="relative w-[149px] h-[3px] bg-[#444] ml-[9px]">
        <div className="absolute left-[71px] -top-[11px] w-[8px] h-[25px] bg-[#444]" />
      </div>
      <span className="ml-[7px] text-[#555] text-[20px]">+</span>
      <span className="ml-[18px] mr-[12px] text-[20px]">100%</span>
    </div>
  </div>
);

/* ---------- taskbar ---------- */
const TB = ({ children, w = "w-[57px]", on, run }: { children: React.ReactNode; w?: string; on?: boolean; run?: boolean }) => (
  <div className={`${w} h-full shrink-0 flex items-center justify-center relative ${on ? "bg-[#4a4a4a]" : ""}`}>
    {children}
    {run && <div className={`absolute bottom-0 h-[3px] bg-[#7db7e0] ${on ? "inset-x-0" : "inset-x-[7px]"}`} />}
  </div>
);
const Taskbar = () => (
  <div className="h-[46px] bg-[#1a1a1c] flex items-center text-white">
    <div className="w-[57px] flex justify-center">
      <svg width="25" height="25" viewBox="0 0 25 25"><path d="M0 4l11-2v10H0zM12.500 1.800L25 0v12H12.500zM0 13.500h11v10L0 22zM12.500 13.500H25V25l-12.500-1.800z" fill="#fff" /></svg>
    </div>
    <TB run><svg width="26" height="24" viewBox="0 0 24 22"><path d="M0 1h9l2 2h13v19H0z" fill="#f0c35c" /><rect x="0" y="7" width="24" height="15" fill="#f7d98a" /><rect x="8" y="11" width="8" height="5" fill="#3f86c9" /><rect x="6" y="15" width="12" height="3" fill="#3f86c9" /></svg></TB>
    <TB><svg width="28" height="28" viewBox="0 0 26 26"><ellipse cx="13" cy="13" rx="13" ry="8" fill="none" stroke="#f1bb2f" strokeWidth="2" transform="rotate(-35 13 13)" /><text x="13" y="21" fontSize="27" fontWeight="700" textAnchor="middle" fill="#39a0e0" fontFamily="Liberation Sans">e</text></svg></TB>
    <TB><svg width="26" height="26" viewBox="0 0 26 26"><circle cx="13" cy="13" r="12" fill="#8dc63f" /><circle cx="13" cy="13" r="9.500" fill="#fff" /><circle cx="13" cy="13" r="8" fill="#8dc63f" /><text x="13" y="19" fontSize="19" fontWeight="700" textAnchor="middle" fill="#fff" fontFamily="Liberation Sans">e</text></svg></TB>
    <TB run w="w-[59px]">
      <svg width="26" height="26" viewBox="0 0 26 26"><circle cx="13" cy="13" r="12.500" fill="#db4437" /><path d="M13 13L2.400 6.800A12.500 12.500 0 0 0 13 25.500z" fill="#0f9d58" /><path d="M13 13v12.500A12.500 12.500 0 0 0 25.500 13 12 12 0 0 0 23.600 6.500z" fill="#f4b400" /><circle cx="13" cy="13" r="5.800" fill="#fff" /><circle cx="13" cy="13" r="4.400" fill="#4285f4" /></svg>
    </TB>
    <TB on run w="w-[55px]">
      <svg width="24" height="24" viewBox="0 0 24 24"><rect x="5" y="0" width="19" height="24" rx="1" fill="#33a66b" /><rect x="14" y="0" width="10" height="8" fill="#4fc088" /><rect x="14" y="16" width="10" height="8" fill="#1f7a4a" /><rect x="0" y="5" width="14" height="14" rx="1" fill="#107c41" /><text x="7" y="16.500" fontSize="12" fontWeight="700" textAnchor="middle" fill="#fff" fontFamily="Liberation Sans">X</text></svg>
    </TB>
    <TB run w="w-[58px]"><svg width="24" height="24" viewBox="0 0 24 24"><rect x="5" y="0" width="19" height="24" rx="1" fill="#2b7cd3" /><rect x="5" y="0" width="19" height="8" fill="#41a5ee" /><rect x="0" y="5" width="14" height="14" rx="1" fill="#185abd" /><text x="7" y="16.500" fontSize="12" fontWeight="700" textAnchor="middle" fill="#fff" fontFamily="Liberation Sans">W</text></svg></TB>
    <TB run><svg width="24" height="24" viewBox="0 0 24 24"><rect x="0" y="0" width="24" height="24" fill="#111" /><rect x="3" y="6" width="14" height="13" rx="1" fill="#e63b35" /><path d="M17 10l5-2v9l-5-2z" fill="#c9c9c9" /></svg></TB>
    <div className="ml-auto flex items-center h-full">
      <div className="w-[61px] h-[33px] border-[3px] border-white bg-[#1a9850] flex items-center justify-center text-[18px] leading-none">95%</div>
      <div className="w-[4px] h-[14px] bg-white" />
      <svg width="20" height="12" viewBox="0 0 20 12" className="ml-[13px]"><path d="M1 11l9-9 9 9" fill="none" stroke="#fff" strokeWidth="1.4" /></svg>
      <svg width="16" height="32" viewBox="0 0 16 32" className="ml-[18px]"><rect x="2" y="0" width="12" height="24" rx="6" fill="#fff" /><path d="M0 17c0 12 16 12 16 0M8 25v6M4 31h8" fill="none" stroke="#fff" /></svg>
      <svg width="24" height="18" viewBox="0 0 24 18" className="ml-[15px]"><rect x="1" y="1" width="21" height="16" fill="#fff" /><rect x="3" y="3" width="17" height="12" fill="#1a1a1c" /><rect x="4" y="4" width="15" height="10" fill="#eee" /><rect x="22" y="6" width="2" height="6" fill="#fff" /></svg>
      <svg width="24" height="26" viewBox="0 0 24 26" className="ml-[11px]"><path d="M.5 1h6v8h-6zM6 1h17v15H1V9" fill="none" stroke="#fff" /><path d="M.5 5h6M12 16v6M6 23h12" stroke="#fff" /></svg>
      <svg width="22" height="20" viewBox="0 0 22 20" className="ml-[13px]"><path d="M1 7h4l6-6v18l-6-6H1z" fill="none" stroke="#ddd" /><path d="M14 7l6 6M20 7l-6 6" stroke="#ddd" /></svg>
      <span className="ml-[13px] text-[23px] font-bold leading-none w-[24px]">中</span>
      <svg width="24" height="28" viewBox="0 0 24 28" className="ml-[19px]"><rect x="1" y="2" width="21" height="24" rx="4" fill="#e2502a" transform="rotate(-8 12 14)" /><text x="12" y="21" fontSize="20" fontWeight="900" textAnchor="middle" fill="#fff" fontFamily="Liberation Sans">S</text></svg>
      <span className="ml-[31px] text-[18px] w-[38px]">9:40</span>
      <svg width="24" height="28" viewBox="0 0 24 28" className="ml-[33px] mr-[39px]"><path d="M0 0h24v22h-8l-4 5-4-5H0z" fill="#fff" /><path d="M4 6h16M4 11h16M4 16h10" stroke="#333" /></svg>
    </div>
  </div>
);

/* ---------- mini toolbar ---------- */
const MB = ({ w, children, on }: { w: string; children?: React.ReactNode; on?: boolean }) => (
  <div className={`${w} h-full shrink-0 flex items-center justify-center ${on ? "bg-[#b8b8b8]" : ""}`}>{children}</div>
);
const MiniToolbar = () => (
  <div className="absolute left-[151px] top-[156px] w-[393px] h-[80px] bg-white shadow-[1px_2px_4px_rgba(0,0,0,0.35)] pl-[4px] pt-[4px] text-[#444] z-20">
    <div className="h-[36px] flex">
      <div className="w-[98px] h-full border border-[#c6c6c6] flex items-center justify-between pl-[2px] pr-[6px] pb-[3px] text-[18px]">等线<Tri /></div>
      <div className="w-[73px] h-full border border-l-0 border-[#c6c6c6] flex items-center justify-between pl-[3px] pr-[6px] pb-[3px] text-[18px]">11<Tri /></div>
      <MB w="w-[30px]"><span className="text-[25px] leading-none relative font-medium">A<span className="absolute -top-[1px] -right-[7px] w-0 h-0 border-x-[4px] border-x-transparent border-b-[5px] border-b-[#666]" /></span></MB>
      <MB w="w-[30px]"><span className="text-[21px] leading-none relative font-medium">A<span className="absolute -top-[1px] -right-[7px] w-0 h-0 border-x-[4px] border-x-transparent border-t-[5px] border-t-[#666]" /></span></MB>
      <MB w="w-[38px]"><svg width="24" height="28" viewBox="0 0 24 28"><rect x="0" y="1" width="23" height="15" fill="#4a76a8" /><circle cx="10" cy="8" r="4" fill="#fff" /><rect x="13" y="12" width="10" height="4" fill={Y} /><rect x="13" y="17" width="10" height="4" fill={Y} /><rect x="13" y="22" width="10" height="4" fill={Y} /></svg></MB>
      <MB w="w-[18px]"><Chev /></MB>
      <MB w="w-[34px]"><span className="text-[24px] leading-none text-[#555] pb-[2px]">%</span></MB>
      <MB w="w-[32px]"><span className="text-[30px] font-bold leading-none -mt-[22px] text-[#555]">,</span></MB>
      <MB w="w-[32px]"><svg width="24" height="30" viewBox="0 0 24 30"><rect x=".5" y=".5" width="23" height="28" fill="none" stroke="#666" /><path d="M.5 7h23M.5 22h23M4 14.500h16M4 14.500l3-2.500M4 14.500l3 2.500M20 14.500l-3-2.500M20 14.500l-3 2.500" fill="none" stroke="#666" /></svg></MB>
    </div>
    <div className="h-[36px] flex">
      <MB w="w-[32px]" on><span className="font-bold text-[22px] leading-none text-[#444]">B</span></MB>
      <MB w="w-[32px]"><span className="italic font-bold text-[24px] leading-none font-['Liberation_Serif',serif] text-[#666]">I</span></MB>
      <MB w="w-[32px]" on><svg width="18" height="22" viewBox="0 0 18 22"><path d="M0 1.500h18M0 6h18M0 10.500h18M0 15h18M0 19.500h18" stroke="#666" /></svg></MB>
      <MB w="w-[34px]"><svg width="26" height="30" viewBox="0 0 26 30"><path d="M12 1l-7 12 8 7 8-7z" fill="#fff" stroke="#666" /><path d="M15 4c6 2 8 8 7 14" fill="none" stroke="#4a76a8" strokeWidth="2" /><rect x="0" y="23" width="25" height="6" fill="#ffeb00" /></svg></MB>
      <MB w="w-[18px]"><Chev /></MB>
      <MB w="w-[36px]"><span className="relative text-[24px] leading-none font-medium pb-[8px]">A<span className="absolute -left-[3px] right-[-3px] bottom-0 h-[7px] bg-black" /></span></MB>
      <MB w="w-[18px]"><Chev /></MB>
      <MB w="w-[34px]"><svg width="22" height="28" viewBox="0 0 22 28"><rect x=".5" y=".5" width="21" height="27" fill="none" stroke="#999" strokeDasharray="1.500 1.500" /><path d="M11 1v26M1 14h20" stroke="#999" strokeDasharray="1.500 1.500" /><path d="M0 27.500h22" stroke="#777" /></svg></MB>
      <MB w="w-[22px]"><Chev /></MB>
      <MB w="w-[32px]"><div className="text-[14px] leading-[14px] text-center"><div><span className="text-[#4a76a8] font-bold">←</span>.0</div><div>.00</div></div></MB>
      <MB w="w-[32px]"><div className="text-[14px] leading-[14px] text-center"><div>.00</div><div><span className="text-[#4a76a8] font-bold">→</span>.0</div></div></MB>
      <MB w="w-[32px]"><svg width="24" height="24" viewBox="0 0 24 24"><path d="M17 1l6 5-5 5-6-5z" fill="#666" /><path d="M13 7l5 5-7 11-10-8z" fill={Y} /></svg></MB>
    </div>
  </div>
);

/* ---------- context menu ---------- */
type Item = { h: string; label: string; k: string; tail?: string; icon?: React.ReactNode; off?: boolean; sep?: boolean; sub?: boolean };
const Ic24 = ({ children }: { children: React.ReactNode }) => <svg width="24" height="24" viewBox="0 0 24 24" className="block">{children}</svg>;
const menu1: Item[] = [
  { h: "h-[35px]", label: "剪切", k: "T", icon: <Ic24><path d="M7 1l8 14M17 1L9 15" stroke="#666" strokeWidth="1.8" /><circle cx="6" cy="19" r="3.800" fill="none" stroke="#4a76a8" strokeWidth="1.500" /><circle cx="17" cy="19" r="3.800" fill="none" stroke="#4a76a8" strokeWidth="1.500" /></Ic24> },
  { h: "h-[35px]", label: "复制", k: "C", icon: <Ic24><Page x={1.5} y={1.5} w={12} h={15} /><Page x={9.5} y={7.5} w={12} h={15} /><Lines x={12} y={13} w={7} n={3} gap={3} /></Ic24> },
];
const menu2: Item[] = [
  { h: "h-[36px]", label: "选择性粘贴", k: "S", tail: "...", sep: true },
  { h: "h-[40px]", label: "智能查找", k: "L", sep: true, icon: <Ic24><circle cx="14" cy="9" r="8" fill="#fff" stroke="#4a76a8" strokeWidth="1.500" /><path d="M8 15l-6 7" stroke="#3a6a9a" strokeWidth="3" /><path d="M14 8v5M14 4.500v1.500" stroke="#555" strokeWidth="2" /></Ic24> },
  { h: "h-[39px]", label: "插入", k: "I", tail: "..." },
  { h: "h-[36px]", label: "删除", k: "D", tail: "..." },
  { h: "h-[36px]", label: "清除内容", k: "N", sep: true },
  { h: "h-[38px]", label: "快速分析", k: "Q", off: true, icon: <Ic24><rect x="3.500" y="4.500" width="18" height="18" fill="none" stroke="#ccc" /><rect x="5" y="10" width="12" height="3" fill="#bbb" /><rect x="5" y="15" width="15" height="3" fill="#bbb" /><circle cx="6" cy="4" r="3.500" fill="#ccc" /></Ic24> },
  { h: "h-[36px]", label: "筛选", k: "E", sub: true },
  { h: "h-[37px]", label: "排序", k: "O", sub: true, sep: true },
  { h: "h-[40px]", label: "从表格/区域获取数据", k: "G", tail: "...", sep: true, icon: <Ic24><Table x={0} y={0} w={23} h={23} cols={3} rows={4} /></Ic24> },
  { h: "h-[40px]", label: "插入批注", k: "M", sep: true, icon: <Ic24><path d="M4 4.500h18v14H10l-3 4v-4H4z" fill="#fff" stroke="#777" /><path d="M4 1v8M0 5h8" stroke="#4f9d7a" strokeWidth="2.500" /></Ic24> },
  { h: "h-[42px]", label: "设置单元格格式", k: "F", tail: "...", icon: <Ic24><rect x=".500" y=".500" width="19" height="21" fill="#fff" stroke="#4a76a8" /><rect x="0" y="0" width="20" height="4" fill="#4a76a8" /><Lines x={8} y={8} w={9} n={3} gap={4.500} c="#666" /><rect x="3" y="7" width="3" height="3" fill="#666" /><rect x="3" y="15.500" width="3" height="3" fill="#666" /></Ic24> },
  { h: "h-[30px]", label: "从下拉列表中选择", k: "K", tail: "..." },
  { h: "h-[40px]", label: "显示拼音字段", k: "S", icon: <div className="w-[22px] text-center leading-none"><div className="text-[11px] font-bold text-[#555] font-['Liberation_Sans',sans-serif]">wén</div><div className="text-[15px] font-bold text-[#4a76a8] -mt-[1px]">文</div></div> },
  { h: "h-[34px]", label: "定义名称", k: "A", tail: "..." },
  { h: "h-[38px]", label: "链接", k: "I", icon: <Ic24><circle cx="9" cy="9" r="8" fill="#fff" stroke="#777" /><path d="M1 9h16M9 1v16" stroke="#777" /><ellipse cx="13" cy="18" rx="6" ry="4" fill="none" stroke="#4a76a8" strokeWidth="2.500" /><ellipse cx="18" cy="18" rx="5" ry="4" fill="none" stroke="#4a76a8" strokeWidth="2.500" /></Ic24> },
];
const MenuRow = ({ it }: { it: Item }) => (
  <div className={`${it.h} flex shrink-0`}>
    <div className="w-[48px] pl-[8px] pb-[2px] flex items-center shrink-0">{it.icon}</div>
    <div className={`flex-1 flex items-center justify-between mr-[2px] pr-[13px] ${it.off ? "text-[#b4b4b4]" : ""} ${it.sep ? "border-b border-[#dcdcdc]" : ""}`}>
      <span className="pb-[3px]">{it.label}(<u>{it.k}</u>){it.tail}</span>
      {it.sub && <svg width="7" height="12" viewBox="0 0 7 12"><path d="M0 0l7 6-7 6z" fill="#666" /></svg>}
    </div>
  </div>
);
const ContextMenu = () => (
  <div className="absolute left-[151px] top-[261px] w-[332px] h-[769px] bg-white shadow-[1px_1px_4px_rgba(0,0,0,0.4)] text-[18px] text-[#444] z-20 flex flex-col">
    <div className="mt-[7px] ml-[7px] w-[318px] h-[41px] border border-[#8f8f8f] flex items-center pl-[18px] pb-[2px] font-bold text-[#555] shrink-0">搜索菜单</div>
    <div className="h-[9px] shrink-0" />
    {menu1.map(it => <MenuRow key={it.label} it={it} />)}
    <div className="h-[35px] flex shrink-0">
      <div className="w-[37px] pl-[10px] flex items-center shrink-0">
        <svg width="24" height="24" viewBox="0 0 24 24"><rect x="0" y="3" width="17" height="19" fill={Y} /><rect x="5" y="0" width="7" height="5" fill="#666" /><path d="M11.500 9.500h7l3.500 3.500v10h-10.500z" fill="#fff" stroke="#777" /></svg>
      </div>
      <div className="flex-1 mr-[2px] bg-[#e6e6e6] pl-[11px] pb-[3px] flex items-center font-bold text-[#555]">粘贴选项:</div>
    </div>
    <div className="h-[45px] pl-[47px] flex items-center shrink-0">
      <svg width="30" height="34" viewBox="0 0 30 34"><path d="M1 5h22v28H1z" fill="none" stroke={Y} strokeWidth="3" /><rect x="7" y="1" width="11" height="6" fill="#666" /><text x="21" y="32" fontSize="19" fill="#444" textAnchor="middle" fontFamily="Liberation Sans">A</text></svg>
    </div>
    {menu2.map(it => <MenuRow key={it.label + it.k} it={it} />)}
  </div>
);

/* ---------- app ---------- */
export default function App() {
  return (
    <div className="relative w-[1920px] h-[1080px] overflow-hidden bg-[#e6e6e6] font-light font-['Noto_Sans_CJK_SC','Liberation_Sans',sans-serif]">
      <div className="bg-[#217346] relative">
        <svg width="660" height="96" viewBox="0 0 660 96" className="absolute right-0 top-0 pointer-events-none">
          <path d="M0 50h200l40 40M90 12h260l60 60M280 0l40 40 70 0 70 50M420 0l60 60 180 0M520 0l-60 60M170 96l30-30h130" fill="none" stroke="#1e6b41" strokeWidth="3" />
        </svg>
        <TitleBar />
        <Tabs />
      </div>
      <Ribbon />
      <FormulaBar />
      <div className="flex h-[665px]">
        <Sheet />
        <VScroll />
      </div>
      <SheetTabs />
      <StatusBar />
      <Taskbar />
      <MiniToolbar />
      <ContextMenu />
      <svg width="20" height="28" viewBox="0 0 20 28" className="absolute left-[149px] top-[677px] z-30">
        <path d="M1 1v21l5-5 4 9 4-2-4-8h7z" fill="#fff" stroke="#333" />
      </svg>
      <div className="absolute left-[1884px] top-[823px] w-[36px] h-[70px] rounded-l-[9px] bg-[#333336] flex items-center justify-center gap-[6px] shadow-[0_2px_6px_rgba(0,0,0,0.4)] z-20">
        <div className="w-[2px] h-[40px] bg-[#555]" />
        <div className="w-[2px] h-[40px] bg-[#555]" />
      </div>
    </div>
  );
}
